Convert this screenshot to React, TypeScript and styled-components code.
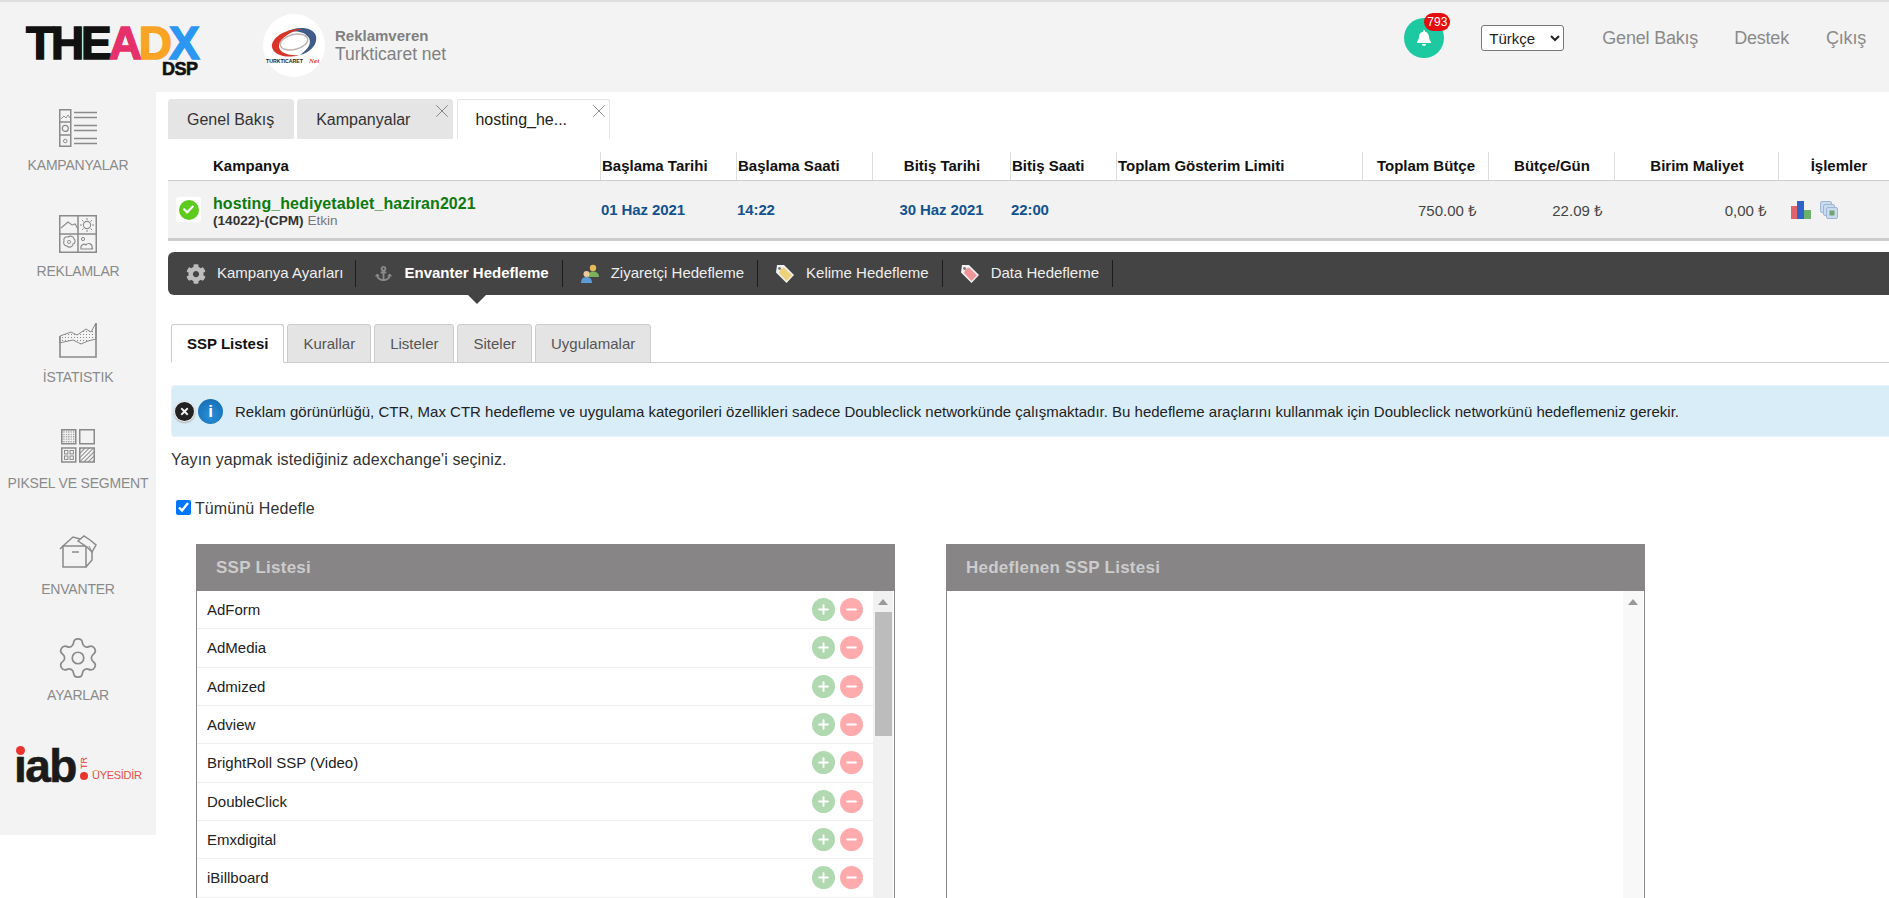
import styled, { createGlobalStyle } from "styled-components";
import { Settings, X, Plus, Minus } from "lucide-react";
import { FaBell, FaCog, FaAnchor, FaCheck, FaTimes } from "react-icons/fa";

const GlobalStyle = createGlobalStyle`
	html, body {
		margin: 0;
		height: 898px;
		overflow: hidden;
		background: #fff;
		font-family: "Liberation Sans", Arial, sans-serif;
	}
`;

const COLUMNS = "432px 136px 136px 138px 106px 246px 126px 126px 164px 111px";

const Page = styled.div`
	width: 1889px;
	height: 898px;
	overflow: hidden;
`;

/* header */
const TopBar = styled.header`
	box-sizing: border-box;
	height: 92px;
	display: flex;
	align-items: flex-start;
	background: #f3f3f3;
	border-top: 2px solid #dedede;
`;

const Logo = styled.div`
	width: 174px;
	margin: 22px 0 0 26px;
	position: relative;
	display: flex;
	font-size: 46px;
	line-height: 38px;
	height: 53px;
	font-weight: 700;
	letter-spacing: -3.1px;
	-webkit-text-stroke: 1.5px currentColor;
	color: #111;
`;

const LogoLetter = styled.span<{ $color: string }>`
	color: ${(props) => props.$color};
`;

const LogoSub = styled.span`
	position: absolute;
	left: 136px;
	top: 38px;
	font-size: 18px;
	line-height: 14px;
	letter-spacing: -0.5px;
	-webkit-text-stroke: 0.6px #111;
	color: #111;
`;

const Advertiser = styled.div`
	margin: 12px 0 0 63px;
	display: flex;
	align-items: center;
	gap: 10px;
`;

const AdvertiserLogo = styled.div`
	width: 62px;
	height: 63px;
	border-radius: 50%;
	background: #fff;
`;

const AdvertiserText = styled.div`
	display: flex;
	flex-direction: column;
	color: #808080;
`;

const AdvertiserRole = styled.span`
	font-size: 15px;
	line-height: 17px;
	font-weight: 700;
`;

const AdvertiserName = styled.span`
	font-size: 17.5px;
	line-height: 20px;
`;

const TopRight = styled.div`
	margin-left: auto;
	display: flex;
	align-items: center;
	padding: 16px 23px 0 0;
`;

const BellButton = styled.div`
	position: relative;
	width: 40px;
	height: 40px;
	border-radius: 50%;
	background: #1cc9a1;
	color: #fff;
	display: flex;
	align-items: center;
	justify-content: center;
	margin-right: 37px;
`;

const BellBadge = styled.span`
	position: absolute;
	top: -5px;
	left: 20px;
	width: 26px;
	height: 18px;
	border-radius: 9px;
	background: #e50d0d;
	color: #fff;
	font-size: 12px;
	line-height: 18px;
	text-align: center;
`;

const LanguageSelect = styled.select`
	box-sizing: border-box;
	width: 83px;
	height: 26px;
	margin-right: 38px;
	padding: 0 0 0 3px;
	font-family: inherit;
	font-size: 15px;
	color: #222;
	background: #fff;
	border: 1px solid #777;
	border-radius: 3px;
`;

const TopLink = styled.a`
	font-size: 18px;
	line-height: 22px;
	color: #8a8a8a;
	margin-left: ${(props: { $gap?: number }) => props.$gap ?? 0}px;
	letter-spacing: -0.2px;
`;

/* body */
const Body = styled.div`
	display: flex;
	align-items: flex-start;
`;

const Sidebar = styled.nav`
	box-sizing: border-box;
	flex: 0 0 156px;
	height: 743px;
	padding-top: 17px;
	background: #f3f3f3;
	display: flex;
	flex-direction: column;
`;

const SideItem = styled.a`
	height: 106px;
	flex: none;
	display: flex;
	flex-direction: column;
	align-items: center;
	color: #8a8a8a;
`;

const SideIcon = styled.div`
	height: 38px;
	display: flex;
	align-items: center;
	justify-content: center;
`;

const SideLabel = styled.span`
	margin-top: 10px;
	font-size: 14px;
	line-height: 16px;
	letter-spacing: -0.2px;
	white-space: nowrap;
`;

const IabLogo = styled.div`
	position: relative;
	margin: 1px 0 0 14px;
	height: 40px;
	font-weight: 700;
	font-size: 46px;
	line-height: 40px;
	letter-spacing: -1.5px;
	color: #1b1b1b;
	-webkit-text-stroke: 0.6px #1b1b1b;
`;

const IabDot = styled.span<{ $left: number; $top: number; $size: number }>`
	position: absolute;
	left: ${(props) => props.$left}px;
	top: ${(props) => props.$top}px;
	width: ${(props) => props.$size}px;
	height: ${(props) => props.$size}px;
	border-radius: 50%;
	background: #e8342e;
`;

const IabTr = styled.span`
	position: absolute;
	left: 64px;
	top: 12px;
	font-size: 9px;
	line-height: 10px;
	font-weight: 400;
	letter-spacing: 0;
	-webkit-text-stroke: 0;
	color: #e8342e;
	transform: rotate(-90deg);
`;

const IabMember = styled.span`
	position: absolute;
	left: 78px;
	top: 22px;
	font-size: 11px;
	line-height: 14px;
	font-weight: 400;
	letter-spacing: -0.3px;
	-webkit-text-stroke: 0;
	color: #e8504a;
`;

const Main = styled.main`
	flex: 1;
	min-width: 0;
	padding: 7px 0 0 12px;
`;

const TabRow = styled.div`
	display: flex;
	gap: 3px;
	height: 40px;
`;

const TopTab = styled.div<{ $active?: boolean; $closable?: boolean }>`
	position: relative;
	box-sizing: border-box;
	height: 40px;
	padding: 0 ${(props) => (props.$closable ? 42 : 19)}px 0 ${(props) => (props.$active ? 17 : 18)}px;
	font-size: 16px;
	line-height: 40px;
	color: ${(props) => (props.$active ? "#222" : "#333")};
	background: ${(props) => (props.$active ? "#fff" : "#e5e5e5")};
	border-radius: 3px 3px 0 0;
	border: 1px solid #e5e5e5;
	${(props) => props.$active && "border-bottom-color: #fff; margin-left: 1px;"}
`;

const TabClose = styled.span`
	position: absolute;
	top: 0;
	right: -1px;
	color: #666;
	display: flex;
`;

const TableGrid = styled.div`
	display: grid;
	grid-template-columns: ${COLUMNS};
`;

const HeadGrid = styled(TableGrid)`
	margin-top: 13px;
	height: 28px;
	border-bottom: 1px solid #ccc;
`;

const HeadCell = styled.div<{ $align?: string; $first?: boolean; $inset?: number }>`
	font-size: 15px;
	font-weight: 700;
	line-height: 28px;
	color: #111;
	white-space: nowrap;
	text-align: ${(props) => props.$align ?? "left"};
	padding-left: ${(props) => (props.$first ? 45 : (props.$inset ?? 1))}px;
	border-left: ${(props) => (props.$first ? "none" : "1px solid #ddd")};
`;

const DataGrid = styled(TableGrid)`
	height: 57px;
	background: #f2f2f2;
	border-bottom: 3px solid #ccc;
	align-items: center;
`;

const CampaignCell = styled.div`
	display: flex;
	align-items: center;
	padding-left: 8px;
`;

const StatusBox = styled.div`
	width: 25px;
	height: 25px;
	background: #fff;
	border-radius: 3px;
	display: flex;
	align-items: center;
	justify-content: center;
	margin-right: 12px;
`;

const StatusDot = styled.div`
	width: 20px;
	height: 20px;
	border-radius: 50%;
	background: #5ccb1e;
	color: #fff;
	display: flex;
	align-items: center;
	justify-content: center;
`;

const CampaignText = styled.div`
	display: flex;
	flex-direction: column;
	padding-top: 5px;
`;

const CampaignName = styled.span`
	font-size: 16px;
	line-height: 18px;
	font-weight: 700;
	letter-spacing: 0.07px;
	color: #0e7a0e;
`;

const CampaignMeta = styled.span`
	font-size: 13.6px;
	line-height: 16px;
	font-weight: 700;
	color: #333;
`;

const CampaignState = styled.span`
	font-weight: 400;
	color: #777;
`;

const DateCell = styled.div<{ $align?: string }>`
	font-size: 15px;
	font-weight: 700;
	letter-spacing: -0.1px;
	color: #14528f;
	padding-left: 1px;
	text-align: ${(props) => props.$align ?? "left"};
`;

const MoneyCell = styled.div`
	font-size: 15px;
	color: #444;
	text-align: right;
	padding-right: 11px;
	grid-column: ${(props: { $column?: number }) => props.$column ?? "auto"};
`;

const ActionCell = styled.div`
	display: flex;
	gap: 9px;
	padding-left: 13px;
`;

const CampaignNav = styled.div`
	margin-top: 11px;
	height: 43px;
	background: #444;
	border-radius: 6px 0 0 6px;
	display: flex;
	align-items: center;
`;

const NavItem = styled.a`
	display: flex;
	align-items: center;
	height: 27px;
	padding: 0 13px 0 17px;
	border-right: 1px solid #1d1d1d;

	&:first-child {
		padding: 0 12px 0 18px;
	}
`;

const NavIcon = styled.span`
	width: 20px;
	margin-right: 11px;
	display: flex;
	justify-content: center;
	color: #bdbdbd;
`;

const NavLabel = styled.span<{ $active?: boolean }>`
	position: relative;
	padding-bottom: 2px;
	font-size: 15px;
	line-height: 25px;
	font-weight: ${(props) => (props.$active ? 700 : 400)};
	color: ${(props) => (props.$active ? "#fff" : "#eee")};

	${(props) =>
		props.$active &&
		`&::after {
			content: "";
			position: absolute;
			left: 50%;
			top: 35px;
			margin-left: -9px;
			border: 9px solid transparent;
			border-top-color: #444;
			border-bottom: 0;
		}`}
`;

const SubTabs = styled.div`
	margin: 29px 0 0 3px;
	height: 38px;
	display: flex;
	gap: 3px;
	border-bottom: 1px solid #ccc;
`;

const SubTab = styled.div<{ $active?: boolean }>`
	box-sizing: border-box;
	height: 39px;
	padding: 0 15px;
	font-size: 15px;
	line-height: 37px;
	font-weight: ${(props) => (props.$active ? 700 : 400)};
	color: ${(props) => (props.$active ? "#111" : "#555")};
	background: ${(props) => (props.$active ? "#fff" : "#e4e4e4")};
	border: 1px solid #ccc;
	border-bottom-color: ${(props) => (props.$active ? "#fff" : "#ccc")};
	border-radius: 3px 3px 0 0;
`;

const InfoBox = styled.div`
	box-sizing: border-box;
	margin: 22px 0 0 3px;
	height: 52px;
	display: flex;
	align-items: center;
	padding-left: 3px;
	background: #d9edf9;
	border: 1px solid #e4f2fb;
	border-right: none;
	border-radius: 4px 0 0 4px;
	font-size: 15px;
	color: #222;
	white-space: nowrap;
`;

const InfoClose = styled.span`
	box-sizing: border-box;
	width: 19px;
	height: 19px;
	margin-right: 4px;
	border-radius: 50%;
	background: #222;
	color: #f2f2f2;
	box-shadow: 0 0 0 1px #eee, 0 1px 2px 1px #aaa;
	display: flex;
	align-items: center;
	justify-content: center;
`;

const InfoMark = styled.span`
	width: 25px;
	height: 25px;
	margin-right: 12px;
	border-radius: 50%;
	background: radial-gradient(circle at 50% 65%, #2a90d8, #1266ad);
	color: #fff;
	font-size: 17px;
	font-weight: 700;
	line-height: 25px;
	text-align: center;
`;

const HintText = styled.p`
	margin: 13px 0 0 3px;
	font-size: 16px;
	line-height: 20px;
	letter-spacing: 0.1px;
	color: #333;
`;

const CheckRow = styled.label`
	margin: 29px 0 0 8px;
	height: 20px;
	display: flex;
	align-items: center;
	gap: 4px;
	font-size: 16px;
	letter-spacing: 0.1px;
	color: #333;
`;

const CheckBox = styled.input`
	width: 15px;
	height: 15px;
	margin: 0 0 3px;
`;

const Panels = styled.div`
	margin: 25px 0 0 28px;
	display: flex;
	gap: 51px;
`;

const Panel = styled.section`
	box-sizing: border-box;
	width: 699px;
	height: 360px;
	display: flex;
	flex-direction: column;
	border-right: 1.5px solid #888;
`;

const PanelTitle = styled.h3`
	margin: 0;
	height: 47px;
	padding-left: 20px;
	background: #888586;
	font-size: 17px;
	font-weight: 700;
	letter-spacing: 0.25px;
	line-height: 47px;
	color: #ccc;
`;

const PanelBody = styled.div`
	flex: 1;
	display: flex;
	border-left: 1px solid #888;
	min-height: 0;
`;

const RowList = styled.div`
	flex: 1;
	min-width: 0;
`;

const ListRow = styled.div`
	box-sizing: border-box;
	height: 38.33px;
	padding-right: 10px;
	display: flex;
	align-items: center;
	justify-content: space-between;
	border-bottom: 1px solid #eee;
	font-size: 15px;
	color: #222;
`;

const RowName = styled.span`
	padding-left: 10px;
`;

const RowButtons = styled.div`
	display: flex;
	gap: 5px;
`;

const RoundButton = styled.span<{ $color: string }>`
	width: 23px;
	height: 23px;
	border-radius: 50%;
	background: ${(props) => props.$color};
	color: #fff;
	display: flex;
	align-items: center;
	justify-content: center;
`;

const ScrollTrack = styled.div<{ $empty?: boolean }>`
	flex: 0 0 20px;
	margin-right: 1px;
	display: flex;
	flex-direction: column;
	align-items: center;
	background: ${(props) => (props.$empty ? "#f8f8f8" : "#f1f1f1")};
	padding-top: 8px;
`;

const ScrollArrow = styled.span`
	flex: none;
	border: 5px solid transparent;
	border-top: 0;
	border-bottom: 6px solid #999;
`;

const ScrollThumb = styled.div`
	margin-top: 7px;
	width: 17px;
	height: 124px;
	background: #bcbcbc;
`;

const sspRows = [
	"AdForm",
	"AdMedia",
	"Admized",
	"Adview",
	"BrightRoll SSP (Video)",
	"DoubleClick",
	"Emxdigital",
	"iBillboard",
];

const sideStroke = "#8a8a8a";

function CampaignsIcon() {
	return (
		<svg width="38" height="38" viewBox="0 0 38 38" fill="none" stroke={sideStroke}>
			<rect x="0.75" y="0.75" width="11" height="36.5" strokeWidth="1.5" />
			<path d="M1 13h11M1 26h11" strokeWidth="1.5" />
			<path d="M2 10l3-3 2 2 2-3 2 3" strokeWidth="0.9" />
			<circle cx="6.3" cy="19.4" r="3" strokeWidth="1.2" />
			<circle cx="6.3" cy="32" r="1.8" strokeWidth="1" />
			<path d="M15 3.5h23M15 8.5h23M15 16.5h23M15 21.5h23M15 29.5h23M15 34.5h23" strokeWidth="1.4" />
		</svg>
	);
}

function AdsIcon() {
	return (
		<svg width="38" height="38" viewBox="0 0 38 38" fill="none" stroke={sideStroke}>
			<rect x="0.75" y="0.75" width="36.5" height="36.5" strokeWidth="1.5" />
			<path d="M19 1v36M1 19h36" strokeWidth="1.5" />
			<path d="M2 13l7-6 4 3 3-1 3 5" strokeWidth="1.1" />
			<circle cx="28" cy="10" r="3.6" strokeWidth="1.1" />
			<path d="M28 3v2M28 15v2M21 10h2M33 10h2M23 5l1.5 1.5M33 5l-1.5 1.5M23 15l1.5-1.5M33 15l-1.5-1.5" strokeWidth="1" />
			<path d="M9 22c3-2 6 0 6 2 2 1 1 5-1 5 0 3-4 4-6 2-3 0-4-3-3-5-1-3 2-5 4-4z" strokeWidth="1.1" />
			<circle cx="10" cy="27" r="1.6" strokeWidth="0.9" />
			<path d="M22 34c-1-4 3-6 5-4 2-3 7-1 6 3 1 0 1 1 0 1z" strokeWidth="1.1" />
			<circle cx="24" cy="24" r="1.6" strokeWidth="1" />
		</svg>
	);
}

function StatsIcon() {
	return (
		<svg width="38" height="36" viewBox="0 0 38 36" fill="none" stroke={sideStroke}>
			<defs>
				<pattern id="statDots" width="3" height="3" patternUnits="userSpaceOnUse">
					<rect width="1" height="1" fill={sideStroke} stroke="none" />
				</pattern>
			</defs>
			<path d="M1 14l11-4 6 3 9-6 5 3 5-9v16l-8 2-7 3-8-4-14 3z" fill="url(#statDots)" strokeWidth="1" />
			<path d="M1 14v21h36V1" strokeWidth="1.6" />
		</svg>
	);
}

function PixelIcon() {
	return (
		<svg width="34" height="34" viewBox="0 0 34 34" fill="none" stroke={sideStroke}>
			<defs>
				<pattern id="pixDots" width="2.4" height="2.4" patternUnits="userSpaceOnUse">
					<rect width="1.2" height="1.2" fill={sideStroke} stroke="none" />
				</pattern>
				<pattern id="pixLines" width="3" height="3" patternUnits="userSpaceOnUse" patternTransform="rotate(-45)">
					<rect width="3" height="1" fill={sideStroke} stroke="none" />
				</pattern>
			</defs>
			<rect x="0.75" y="0.75" width="14" height="14" strokeWidth="1.5" fill="url(#pixDots)" />
			<rect x="18.75" y="0.75" width="14.5" height="14" strokeWidth="1.5" />
			<rect x="0.75" y="19" width="14" height="14" strokeWidth="1.5" />
			<rect x="3.5" y="21.5" width="3.4" height="3.4" strokeWidth="1" />
			<rect x="9" y="21.5" width="3.4" height="3.4" strokeWidth="1" />
			<rect x="3.5" y="27" width="3.4" height="3.4" strokeWidth="1" />
			<rect x="9" y="27" width="3.4" height="3.4" strokeWidth="1" />
			<rect x="18.75" y="19" width="14.5" height="14" strokeWidth="1.5" fill="url(#pixLines)" />
		</svg>
	);
}

function InventoryIcon() {
	return (
		<svg width="38" height="34" viewBox="0 0 38 34" fill="none" stroke={sideStroke} strokeWidth="1.5">
			<path d="M4 11v21h23V11z" />
			<path d="M4 11l10-9 11 3M27 11l4-4M27 32l6-7V15" />
			<path d="M1 14l3-3M13 17h7" />
			<path d="M19 6l6-5 6 4 6 5-4 7-5-5z" fill="#f3f3f3" />
			<path d="M30 11l3 6" strokeWidth="1" />
		</svg>
	);
}

function AdvertiserMark() {
	return (
		<svg width="62" height="63" viewBox="0 0 62 63">
			<ellipse cx="31" cy="28" rx="14" ry="7.5" fill="none" stroke="#bdb2b2" strokeWidth="1.5" transform="rotate(-14 31 28)" />
			<path d="M22 19C32 12 50 12 53 22 55 31 46 39 37 41 44 36 49 30 46 24 42 17 32 16 22 19z" fill="#3f5d87" />
			<path d="M40 15C22 14 8 24 9 33 10 41 24 45 36 41 24 42 15 38 16 31 17 24 28 17 40 15z" fill="#d8352a" />
			<text x="3" y="48.500" fontSize="5.2" fontWeight="700" fontFamily="Liberation Sans, sans-serif" fill="#222">TURKTICARET</text>
			<text x="46" y="49" fontSize="7" fontWeight="700" fontStyle="italic" fontFamily="Liberation Serif, serif" fill="#d8352a">Net</text>
		</svg>
	);
}

function UsersIcon() {
	return (
		<svg width="20" height="20" viewBox="0 0 20 20">
			<circle cx="13" cy="4" r="3.2" fill="#e5b85a" />
			<path d="M8 13c0-4 2-5.500 5-5.500s6 1.500 6 5.500z" fill="#79b25a" />
			<circle cx="6.500" cy="10" r="3" fill="#eec9a0" />
			<path d="M1 19c0-4 2-6 5.500-6s5.500 2 5.500 6z" fill="#5b9bd8" />
		</svg>
	);
}

function TagIcon({ fill }: { fill: string }) {
	return (
		<svg width="20" height="20" viewBox="0 0 20 20">
			<path d="M2 1h7l10 10-7.500 8L1 8.500z" fill="#f2f2f2" />
			<path d="M5.500 5L9 3.500l8 7.700-5.500 5.800L4 9z" fill={fill} />
			<circle cx="4.500" cy="4.500" r="1.400" fill="#777" />
		</svg>
	);
}

function StatsAction() {
	return (
		<svg width="20" height="18" viewBox="0 0 20 18">
			<rect x="0" y="5" width="6" height="13" fill="#e2626b" />
			<rect x="6" y="0" width="7" height="18" fill="#2f63c8" />
			<rect x="13" y="9" width="7" height="9" fill="#6bb06b" />
		</svg>
	);
}

function CopyAction() {
	return (
		<svg width="18" height="18" viewBox="0 0 18 18" fill="#c9dbee" stroke="#9db8d4">
			<rect x="0.5" y="0.5" width="11" height="11" rx="1.5" />
			<rect x="3.500" y="3.500" width="11" height="11" rx="1.500" />
			<rect x="6.500" y="6.500" width="11" height="11" rx="1.500" />
			<rect x="9.500" y="9.500" width="5" height="5" fill="#6ea56e" stroke="none" />
		</svg>
	);
}

function App() {
	return (
		<Page>
			<GlobalStyle />
			<TopBar>
				<Logo>
					<span>THE</span>
					<LogoLetter $color="#e6306b">A</LogoLetter>
					<LogoLetter $color="#f9a424">D</LogoLetter>
					<LogoLetter $color="#2b97f3">X</LogoLetter>
					<LogoSub>DSP</LogoSub>
				</Logo>
				<Advertiser>
					<AdvertiserLogo>
						<AdvertiserMark />
					</AdvertiserLogo>
					<AdvertiserText>
						<AdvertiserRole>Reklamveren</AdvertiserRole>
						<AdvertiserName>Turkticaret net</AdvertiserName>
					</AdvertiserText>
				</Advertiser>
				<TopRight>
					<BellButton>
						<FaBell size={16} />
						<BellBadge>793</BellBadge>
					</BellButton>
					<LanguageSelect defaultValue="tr">
						<option value="tr">Türkçe</option>
					</LanguageSelect>
					<TopLink>Genel Bakış</TopLink>
					<TopLink $gap={36}>Destek</TopLink>
					<TopLink $gap={37}>Çıkış</TopLink>
				</TopRight>
			</TopBar>
			<Body>
				<Sidebar>
					<SideItem>
						<SideIcon><CampaignsIcon /></SideIcon>
						<SideLabel>KAMPANYALAR</SideLabel>
					</SideItem>
					<SideItem>
						<SideIcon><AdsIcon /></SideIcon>
						<SideLabel>REKLAMLAR</SideLabel>
					</SideItem>
					<SideItem>
						<SideIcon><StatsIcon /></SideIcon>
						<SideLabel>İSTATISTIK</SideLabel>
					</SideItem>
					<SideItem>
						<SideIcon><PixelIcon /></SideIcon>
						<SideLabel>PIKSEL VE SEGMENT</SideLabel>
					</SideItem>
					<SideItem>
						<SideIcon><InventoryIcon /></SideIcon>
						<SideLabel>ENVANTER</SideLabel>
					</SideItem>
					<SideItem>
						<SideIcon><Settings size={46} strokeWidth={0.9} color={sideStroke} /></SideIcon>
						<SideLabel>AYARLAR</SideLabel>
					</SideItem>
					<IabLogo>
						ıab
						<IabDot $left={2} $top={0} $size={9} />
						<IabDot $left={66} $top={26} $size={8} />
						<IabTr>TR</IabTr>
						<IabMember>ÜYESİDİR</IabMember>
					</IabLogo>
				</Sidebar>
				<Main>
					<TabRow>
						<TopTab>Genel Bakış</TopTab>
						<TopTab $closable>
							Kampanyalar
							<TabClose><X size={22} strokeWidth={0.8} /></TabClose>
						</TopTab>
						<TopTab $closable $active>
							hosting_he...
							<TabClose><X size={22} strokeWidth={0.8} /></TabClose>
						</TopTab>
					</TabRow>
					<HeadGrid>
						<HeadCell $first>Kampanya</HeadCell>
						<HeadCell>Başlama Tarihi</HeadCell>
						<HeadCell>Başlama Saati</HeadCell>
						<HeadCell $align="center">Bitiş Tarihi</HeadCell>
						<HeadCell>Bitiş Saati</HeadCell>
						<HeadCell>Toplam Gösterim Limiti</HeadCell>
						<HeadCell $align="center">Toplam Bütçe</HeadCell>
						<HeadCell $align="center">Bütçe/Gün</HeadCell>
						<HeadCell $align="center">Birim Maliyet</HeadCell>
						<HeadCell $align="center" $inset={10}>İşlemler</HeadCell>
					</HeadGrid>
					<DataGrid>
						<CampaignCell>
							<StatusBox>
								<StatusDot><FaCheck size={11} /></StatusDot>
							</StatusBox>
							<CampaignText>
								<CampaignName>hosting_hediyetablet_haziran2021</CampaignName>
								<CampaignMeta>
									(14022)-(CPM) <CampaignState>Etkin</CampaignState>
								</CampaignMeta>
							</CampaignText>
						</CampaignCell>
						<DateCell>01 Haz 2021</DateCell>
						<DateCell>14:22</DateCell>
						<DateCell $align="center">30 Haz 2021</DateCell>
						<DateCell>22:00</DateCell>
						<MoneyCell $column={7}>750.00 ₺</MoneyCell>
						<MoneyCell>22.09 ₺</MoneyCell>
						<MoneyCell>0,00 ₺</MoneyCell>
						<ActionCell>
							<StatsAction />
							<CopyAction />
						</ActionCell>
					</DataGrid>
					<CampaignNav>
						<NavItem>
							<NavIcon><FaCog size={20} /></NavIcon>
							<NavLabel>Kampanya Ayarları</NavLabel>
						</NavItem>
						<NavItem>
							<NavIcon><FaAnchor size={17} color="#8a8a8a" /></NavIcon>
							<NavLabel $active>Envanter Hedefleme</NavLabel>
						</NavItem>
						<NavItem>
							<NavIcon><UsersIcon /></NavIcon>
							<NavLabel>Ziyaretçi Hedefleme</NavLabel>
						</NavItem>
						<NavItem>
							<NavIcon><TagIcon fill="#ecd27a" /></NavIcon>
							<NavLabel>Kelime Hedefleme</NavLabel>
						</NavItem>
						<NavItem>
							<NavIcon><TagIcon fill="#f0949c" /></NavIcon>
							<NavLabel>Data Hedefleme</NavLabel>
						</NavItem>
					</CampaignNav>
					<SubTabs>
						<SubTab $active>SSP Listesi</SubTab>
						<SubTab>Kurallar</SubTab>
						<SubTab>Listeler</SubTab>
						<SubTab>Siteler</SubTab>
						<SubTab>Uygulamalar</SubTab>
					</SubTabs>
					<InfoBox>
						<InfoClose><FaTimes size={11} /></InfoClose>
						<InfoMark>i</InfoMark>
						Reklam görünürlüğü, CTR, Max CTR hedefleme ve uygulama kategorileri özellikleri sadece Doubleclick networkünde çalışmaktadır. Bu hedefleme araçlarını kullanmak için Doubleclick networkünü hedeflemeniz gerekir.
					</InfoBox>
					<HintText>Yayın yapmak istediğiniz adexchange'i seçiniz.</HintText>
					<CheckRow>
						<CheckBox type="checkbox" defaultChecked />
						Tümünü Hedefle
					</CheckRow>
					<Panels>
						<Panel>
							<PanelTitle>SSP Listesi</PanelTitle>
							<PanelBody>
								<RowList>
									{sspRows.map((name) => (
										<ListRow key={name}>
											<RowName>{name}</RowName>
											<RowButtons>
												<RoundButton $color="#b1d9b1"><Plus size={15} strokeWidth={3} /></RoundButton>
												<RoundButton $color="#ffabae"><Minus size={15} strokeWidth={3} /></RoundButton>
											</RowButtons>
										</ListRow>
									))}
								</RowList>
								<ScrollTrack>
									<ScrollArrow />
									<ScrollThumb />
								</ScrollTrack>
							</PanelBody>
						</Panel>
						<Panel>
							<PanelTitle>Hedeflenen SSP Listesi</PanelTitle>
							<PanelBody>
								<RowList />
								<ScrollTrack $empty>
									<ScrollArrow />
								</ScrollTrack>
							</PanelBody>
						</Panel>
					</Panels>
				</Main>
			</Body>
		</Page>
	);
}

export default App;
